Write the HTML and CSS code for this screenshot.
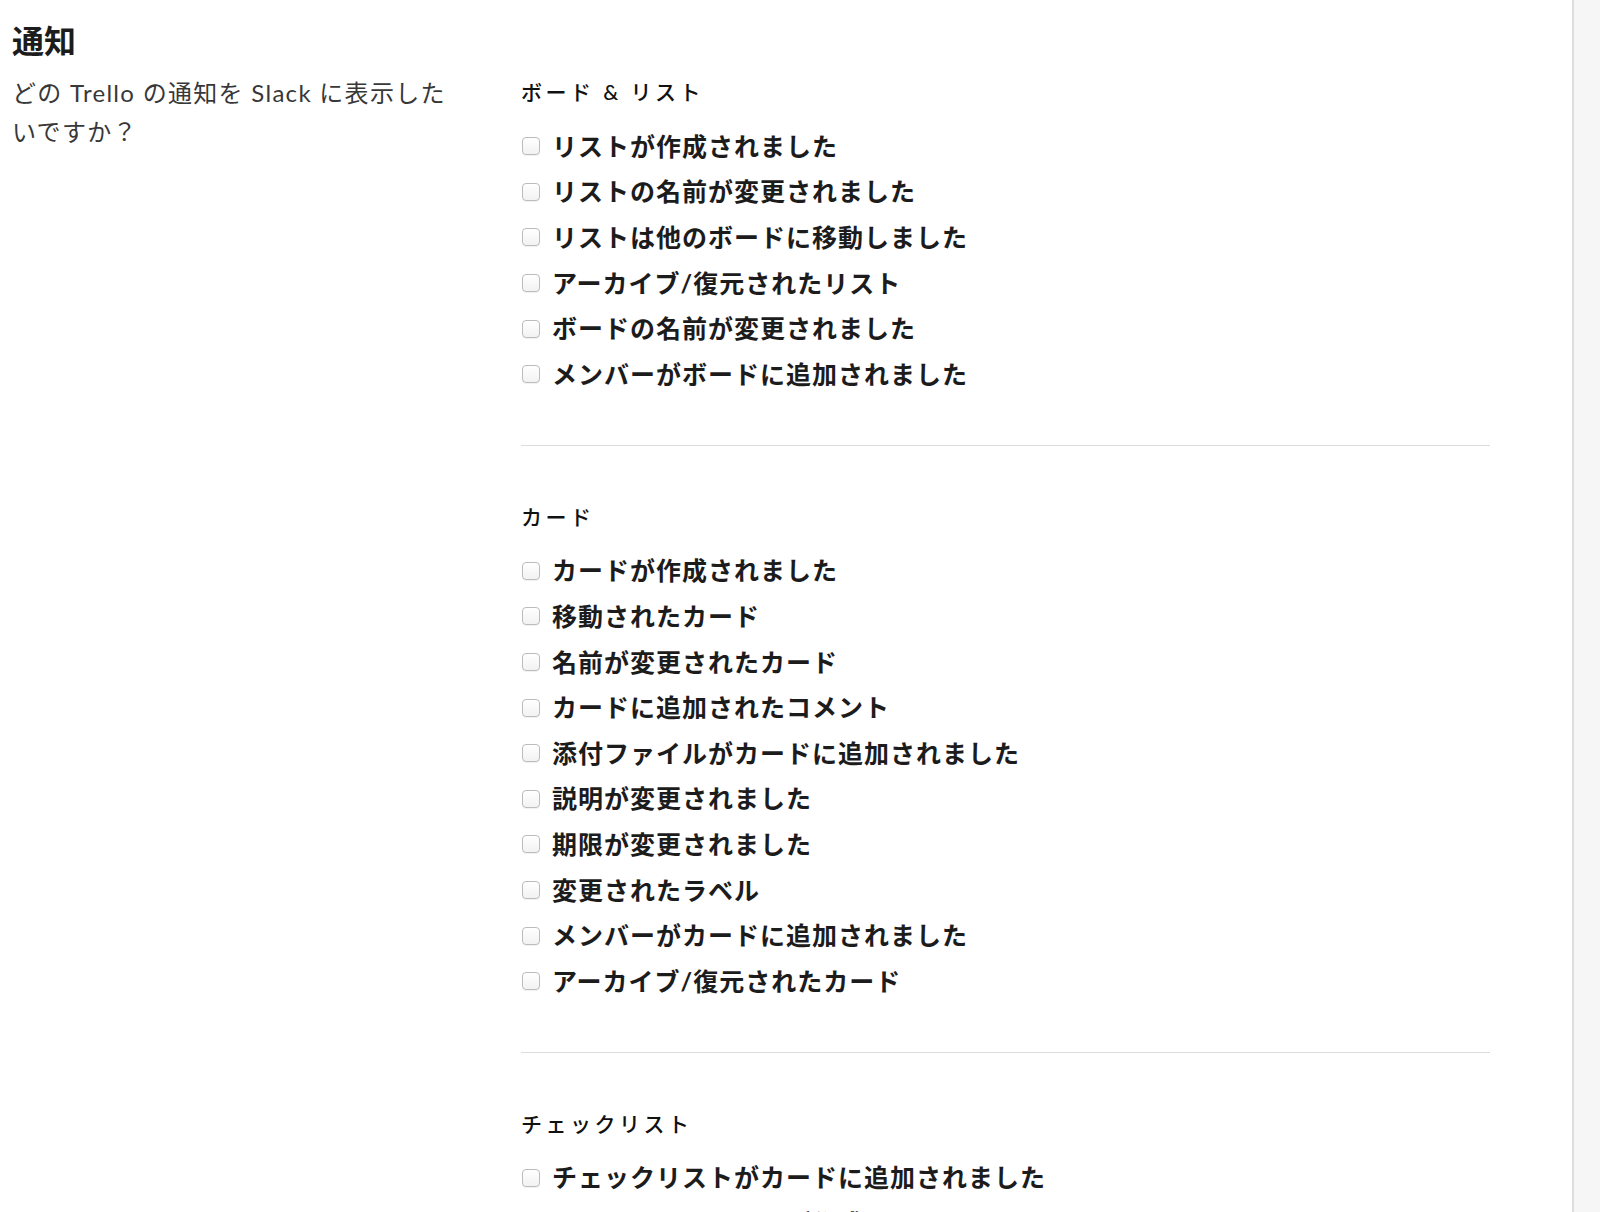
FILE: index.html
```html
<!DOCTYPE html>
<html lang="ja">

<head>
    <meta charset="UTF-8">
    <meta name="viewport" content="width=device-width, initial-scale=1.0">
    <title>通知</title>
    <link rel="stylesheet" href="styles.css">
</head>

<body>
    <div class="page">
        <div class="main">
            <h1 class="title">通知</h1>
            <div class="settings">
                <p class="description">どの Trello の通知を Slack に表示したいですか？</p>

                <div class="options">
                    <section class="group">
                        <h2>ボード &amp; リスト</h2>
                        <ul>
                            <li><label><input type="checkbox"> リストが作成されました</label></li>
                            <li><label><input type="checkbox"> リストの名前が変更されました</label></li>
                            <li><label><input type="checkbox"> リストは他のボードに移動しました</label></li>
                            <li><label><input type="checkbox"> アーカイブ/復元されたリスト</label></li>
                            <li><label><input type="checkbox"> ボードの名前が変更されました</label></li>
                            <li><label><input type="checkbox"> メンバーがボードに追加されました</label></li>
                        </ul>
                    </section>

                    <section class="group">
                        <h2>カード</h2>
                        <ul>
                            <li><label><input type="checkbox"> カードが作成されました</label></li>
                            <li><label><input type="checkbox"> 移動されたカード</label></li>
                            <li><label><input type="checkbox"> 名前が変更されたカード</label></li>
                            <li><label><input type="checkbox"> カードに追加されたコメント</label></li>
                            <li><label><input type="checkbox"> 添付ファイルがカードに追加されました</label></li>
                            <li><label><input type="checkbox"> 説明が変更されました</label></li>
                            <li><label><input type="checkbox"> 期限が変更されました</label></li>
                            <li><label><input type="checkbox"> 変更されたラベル</label></li>
                            <li><label><input type="checkbox"> メンバーがカードに追加されました</label></li>
                            <li><label><input type="checkbox"> アーカイブ/復元されたカード</label></li>
                        </ul>
                    </section>

                    <section class="group">
                        <h2>チェックリスト</h2>
                        <ul>
                            <li><label><input type="checkbox"> チェックリストがカードに追加されました</label></li>
                            <li><label><input type="checkbox"> チェックリスト項目が作成されました</label></li>
                        </ul>
                    </section>
                </div>
            </div>
        </div>
        <div class="sidebar"></div>
    </div>
</body>

</html>
```

FILE: styles.css
```css
html,
body {
    margin: 0;
    height: 100%;
    overflow: hidden;
}

body {
    font-family: Lato, "Noto Sans CJK JP", sans-serif;
    color: #1d1c1d;
    background: #ffffff;
}

.page {
    display: flex;
    height: 100%;
}

.main {
    flex: 1;
    padding: 20px 0 0 12px;
}

.sidebar {
    width: 26px;
    border-left: 2px solid #dedede;
    background-color: #f6f6f6;
}

.title {
    margin: 0 0 16px;
    font-size: 32px;
    line-height: 41px;
    font-weight: 700;
}

.settings {
    display: grid;
    grid-template-columns: 509px 969px;
}

.description {
    margin: -4px 0 0;
    max-width: 445px;
    font-size: 24px;
    line-height: 39px;
    color: #383838;
    letter-spacing: 1.3px;
}

.group {
    padding: 56px 0 49px;
    border-top: 1px solid #dddddd;
}

.group:first-child {
    padding-top: 0;
    border-top: none;
}

.group h2 {
    margin: 0 0 15px;
    font-size: 21px;
    line-height: 30px;
    font-weight: 500;
    letter-spacing: 3.5px;
    color: #111;
}

.group ul {
    list-style: none;
    margin: 0;
    padding: 0;
}

.group li {
    height: 45.6px;
    display: flex;
    align-items: center;
}

.group label {
    display: flex;
    align-items: center;
    font-size: 25px;
    font-weight: 700;
    letter-spacing: 1px;
    white-space: nowrap;
}

/* soft rounded checkbox, like the mac default */
.group input[type="checkbox"] {
    appearance: none;
    width: 18px;
    height: 18px;
    margin: 3px 12px 0 1px;
    border: 1px solid #bcbcbc;
    border-radius: 4px;
    background: linear-gradient(to bottom, #ffffff, #f2f2f2);
    box-shadow: 0 1px 1px rgba(0, 0, 0, 0.06);
}
```
